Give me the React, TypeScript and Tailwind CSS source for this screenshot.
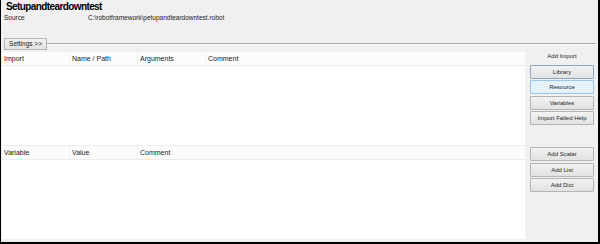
const font = { fontFamily: '"Liberation Sans", Arial, sans-serif' };

function Btn({ label, active, focus, className = "" }: { label: string; active?: boolean; focus?: boolean; className?: string }) {
  const tone = active
    ? "bg-[#e5f1fb] border-[#9cc3e8]"
    : focus
    ? "bg-gradient-to-b from-[#f2f2f2] to-[#e2e2e2] border-[#8da6c2]"
    : "bg-gradient-to-b from-[#f2f2f2] to-[#e2e2e2] border-[#b4b4b4]";
  return (
    <div
      className={`w-[64px] h-[14px] border rounded-[1px] flex items-center justify-center text-[6px] leading-none text-[#1e1e1e] ${tone} ${className}`}
    >
      {label}
    </div>
  );
}

function Grid({ cols, border }: { cols: string[]; border?: boolean }) {
  return (
    <div className={`flex-1 flex flex-col bg-white ${border ? "border-t border-[#ececec]" : ""}`}>
      <div className="flex h-[14px] bg-[#fcfcfc] border-b border-[#ececec]">
        {cols.map((c, i) => (
          <div
            key={c}
            className={`h-full flex items-center pl-[2px] text-[7px] leading-none text-[#1a1a1a] ${
              i < cols.length - 1 ? "w-[68px] border-r border-[#f1f1f1]" : "flex-1"
            }`}
          >
            {c}
          </div>
        ))}
      </div>
      <div className="flex-1" />
    </div>
  );
}

export default function App() {
  return (
    <div
      style={font}
      className="antialiased w-[600px] h-[244px] bg-[#f0f0f0] border-l border-r-2 border-b-2 border-black flex flex-col overflow-hidden"
    >
      <div className="h-[13px] pl-[5px] flex items-center text-[10px] font-bold tracking-[-0.6px] text-black">
        Setupandteardowntest
      </div>
      <div className="h-[10px] flex items-center text-[6.5px] leading-none text-[#1a1a1a]">
        <div className="w-[87px] pl-[3px]">Source</div>
        <div>C:\robotframework\petupandteardowntest.robot</div>
      </div>
      <div className="h-[15px]" />
      <div className="flex items-center h-[12px]">
        <div className="ml-[3px] w-[43px] h-[12px] border border-[#b4b4b4] bg-gradient-to-b from-[#f2f2f2] to-[#e3e3e3] flex items-center justify-center text-[6.5px] leading-none text-[#1a1a1a]">
          Settings &gt;&gt;
        </div>
        <div className="flex-1 h-[2px] border-t border-[#a9a9a9] border-b border-b-white mr-[2px]" />
      </div>
      <div className="h-[2px]" />
      <div className="flex h-[187px]">
        <div className="ml-[1px] w-[523px] flex flex-col">
          <Grid cols={["Import", "Name / Path", "Arguments", "Comment"]} />
          <Grid cols={["Variable", "Value", "Comment"]} border />
        </div>
        <div className="flex-1 flex flex-col pl-[5px]">
          <div className="w-[64px] h-[9px] leading-[9px] text-center text-[6px] text-[#1e1e1e]">Add Import</div>
          <Btn label="Library" focus className="mt-[4px]" />
          <Btn label="Resource" active className="mt-[1px]" />
          <Btn label="Variables" className="mt-[2px]" />
          <Btn label="Import Failed Help" className="mt-[1px]" />
          <Btn label="Add Scalar" className="mt-[22px]" />
          <Btn label="Add List" className="mt-[2px]" />
          <Btn label="Add Dict" className="mt-[1px]" />
        </div>
      </div>
    </div>
  );
}
